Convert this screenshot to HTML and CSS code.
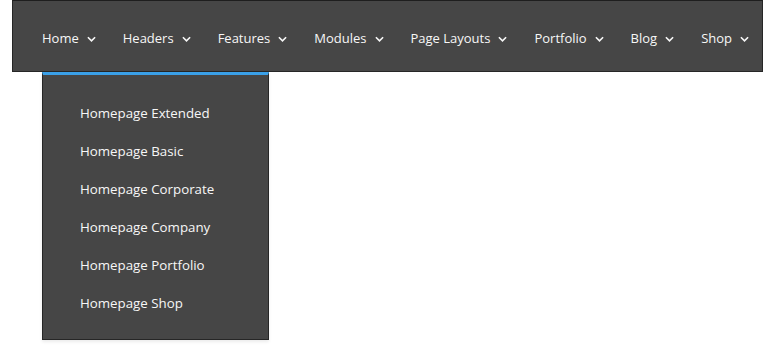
FILE: index.html
```html
<!DOCTYPE html>
<html lang="en">
<head>
  <meta charset="UTF-8" />
  <meta name="viewport" content="width=device-width, initial-scale=1.0" />
  <title>Menu</title>
  <link rel="stylesheet" href="styles.css">
</head>
<body>

  <nav class="navbar">
    <ul class="menu">
      <li class="menu-item open">
        <a href="#">Home <svg class="caret" viewBox="0 0 10 6"><polyline points="1,1 5,5 9,1" /></svg></a>
        <ul class="dropdown">
          <li><a href="#">Homepage Extended</a></li>
          <li><a href="#">Homepage Basic</a></li>
          <li><a href="#">Homepage Corporate</a></li>
          <li><a href="#">Homepage Company</a></li>
          <li><a href="#">Homepage Portfolio</a></li>
          <li><a href="#">Homepage Shop</a></li>
        </ul>
      </li>
      <li class="menu-item"><a href="#">Headers <svg class="caret" viewBox="0 0 10 6"><polyline points="1,1 5,5 9,1" /></svg></a></li>
      <li class="menu-item"><a href="#">Features <svg class="caret" viewBox="0 0 10 6"><polyline points="1,1 5,5 9,1" /></svg></a></li>
      <li class="menu-item"><a href="#">Modules <svg class="caret" viewBox="0 0 10 6"><polyline points="1,1 5,5 9,1" /></svg></a></li>
      <li class="menu-item"><a href="#">Page Layouts <svg class="caret" viewBox="0 0 10 6"><polyline points="1,1 5,5 9,1" /></svg></a></li>
      <li class="menu-item"><a href="#">Portfolio <svg class="caret" viewBox="0 0 10 6"><polyline points="1,1 5,5 9,1" /></svg></a></li>
      <li class="menu-item"><a href="#">Blog <svg class="caret" viewBox="0 0 10 6"><polyline points="1,1 5,5 9,1" /></svg></a></li>
      <li class="menu-item"><a href="#">Shop <svg class="caret" viewBox="0 0 10 6"><polyline points="1,1 5,5 9,1" /></svg></a></li>
    </ul>
  </nav>

</body>
</html>
```

FILE: styles.css
```css
* {
  box-sizing: border-box;
  margin: 0;
  padding: 0;
  font-family: 'Open Sans', 'Noto Sans', sans-serif;
}

html,
body {
  min-height: 100vh;
}

body {
  background-color: #ffffff;
  padding-left: 12px;
}

.navbar {
  position: relative;
  z-index: 1;
  width: 751px;
  height: 72px;
  background-color: #464646;
  border: 1px solid #262626;
  border-top-color: #1e1e1e;
}

.menu {
  list-style: none;
  display: flex;
  height: 100%;
  padding-left: 15.5px;
}

.menu-item {
  position: relative;
  display: flex;
  align-items: center;
}

.menu-item > a {
  display: flex;
  align-items: center;
  padding: 4px 13.5px 0;
  color: #f7f7f7;
  text-decoration: none;
  font-size: 13px;
  white-space: nowrap;
}

.caret {
  width: 9px;
  height: 6px;
  margin-left: 8px;
  margin-top: 1px;
  fill: none;
  stroke: #f7f7f7;
  stroke-width: 1.8;
}

.dropdown {
  list-style: none;
  position: absolute;
  z-index: 2;
  top: 71px;
  left: 13.5px;
  width: 227px;
  padding: 19px 0 17px;
  background-color: #464646;
  border: 1px solid #262626;
  border-top: 3px solid #3aa0e8;
  box-shadow: 0 2px 3px rgba(0, 0, 0, 0.08);
}

.dropdown a {
  display: block;
  padding-left: 37px;
  line-height: 38px;
  color: #f7f7f7;
  text-decoration: none;
  font-size: 13.3px;
}
```
